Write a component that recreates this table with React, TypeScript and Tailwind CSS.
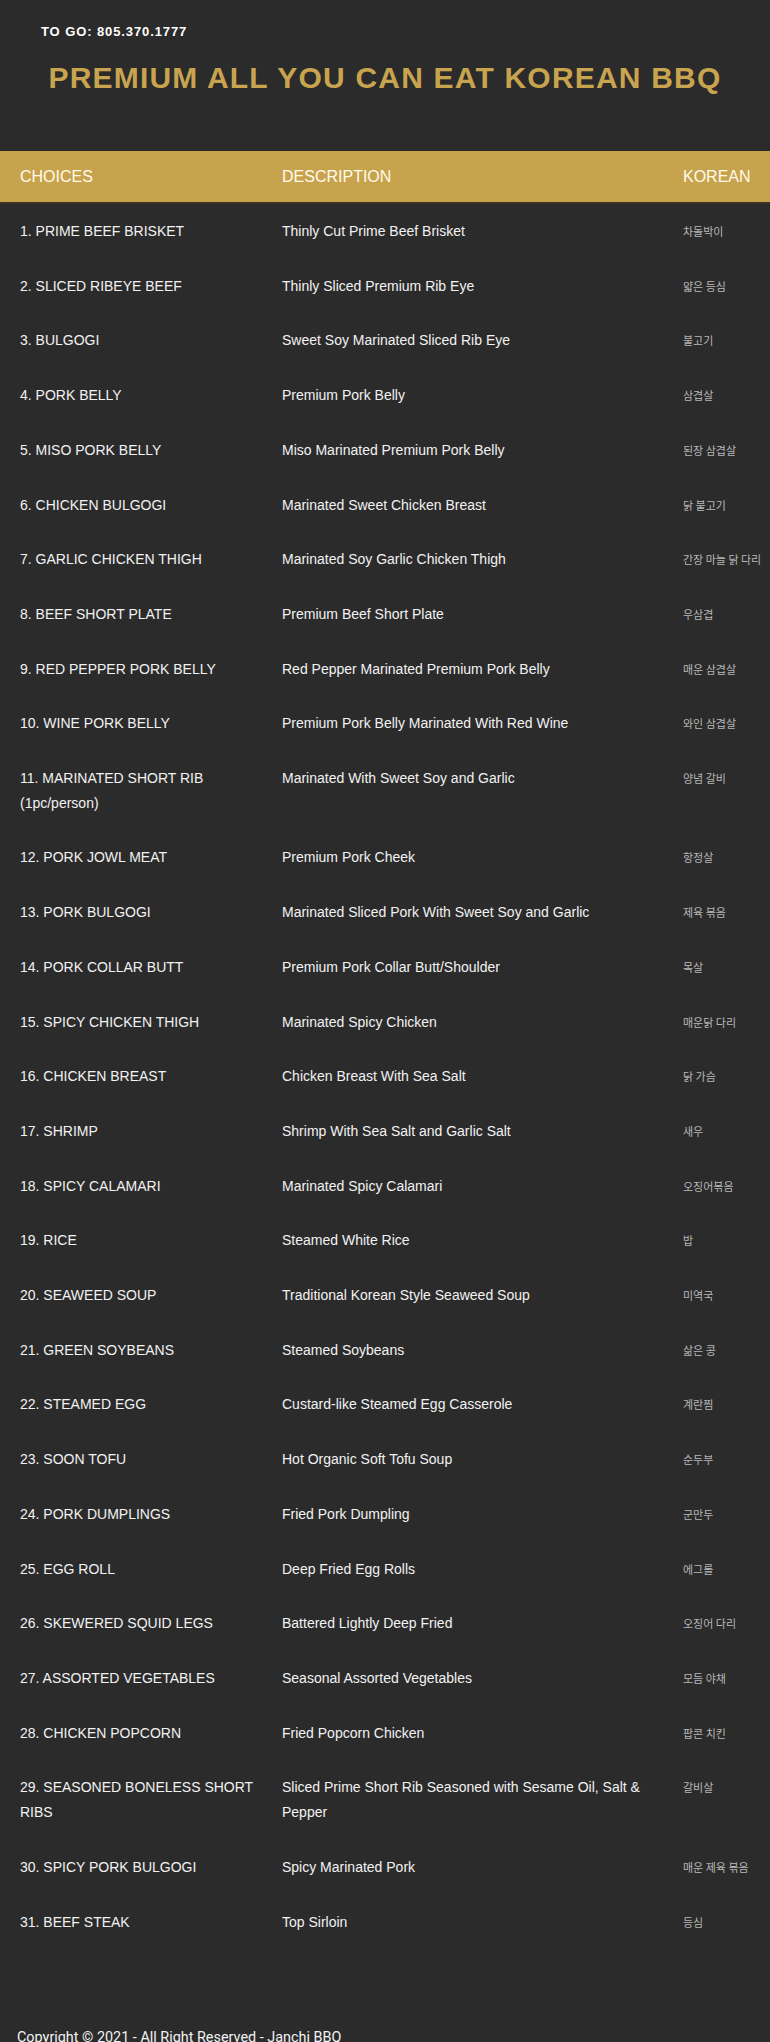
import React from 'react';

type Item = { name: string; desc: string; kr: string };

const items: Item[] = [
  { name: '1. PRIME BEEF BRISKET', desc: 'Thinly Cut Prime Beef Brisket', kr: '차돌박이' },
  { name: '2. SLICED RIBEYE BEEF', desc: 'Thinly Sliced Premium Rib Eye', kr: '얇은 등심' },
  { name: '3. BULGOGI', desc: 'Sweet Soy Marinated Sliced Rib Eye', kr: '불고기' },
  { name: '4. PORK BELLY', desc: 'Premium Pork Belly', kr: '삼겹살' },
  { name: '5. MISO PORK BELLY', desc: 'Miso Marinated Premium Pork Belly', kr: '된장 삼겹살' },
  { name: '6. CHICKEN BULGOGI', desc: 'Marinated Sweet Chicken Breast', kr: '닭 불고기' },
  { name: '7. GARLIC CHICKEN THIGH', desc: 'Marinated Soy Garlic Chicken Thigh', kr: '간장 마늘 닭 다리' },
  { name: '8. BEEF SHORT PLATE', desc: 'Premium Beef Short Plate', kr: '우삼겹' },
  { name: '9. RED PEPPER PORK BELLY', desc: 'Red Pepper Marinated Premium Pork Belly', kr: '매운 삼겹살' },
  { name: '10. WINE PORK BELLY', desc: 'Premium Pork Belly Marinated With Red Wine', kr: '와인 삼겹살' },
  { name: '11. MARINATED SHORT RIB (1pc/person)', desc: 'Marinated With Sweet Soy and Garlic', kr: '양념 갈비' },
  { name: '12. PORK JOWL MEAT', desc: 'Premium Pork Cheek', kr: '항정살' },
  { name: '13. PORK BULGOGI', desc: 'Marinated Sliced Pork With Sweet Soy and Garlic', kr: '제육 볶음' },
  { name: '14. PORK COLLAR BUTT', desc: 'Premium Pork Collar Butt/Shoulder', kr: '목살' },
  { name: '15. SPICY CHICKEN THIGH', desc: 'Marinated Spicy Chicken', kr: '매운닭 다리' },
  { name: '16. CHICKEN BREAST', desc: 'Chicken Breast With Sea Salt', kr: '닭 가슴' },
  { name: '17. SHRIMP', desc: 'Shrimp With Sea Salt and Garlic Salt', kr: '새우' },
  { name: '18. SPICY CALAMARI', desc: 'Marinated Spicy Calamari', kr: '오징어볶음' },
  { name: '19. RICE', desc: 'Steamed White Rice', kr: '밥' },
  { name: '20. SEAWEED SOUP', desc: 'Traditional Korean Style Seaweed Soup', kr: '미역국' },
  { name: '21. GREEN SOYBEANS', desc: 'Steamed Soybeans', kr: '삶은 콩' },
  { name: '22. STEAMED EGG', desc: 'Custard-like Steamed Egg Casserole', kr: '계란찜' },
  { name: '23. SOON TOFU', desc: 'Hot Organic Soft Tofu Soup', kr: '순두부' },
  { name: '24. PORK DUMPLINGS', desc: 'Fried Pork Dumpling', kr: '군만두' },
  { name: '25. EGG ROLL', desc: 'Deep Fried Egg Rolls', kr: '에그롤' },
  { name: '26. SKEWERED SQUID LEGS', desc: 'Battered Lightly Deep Fried', kr: '오징어 다리' },
  { name: '27. ASSORTED VEGETABLES', desc: 'Seasonal Assorted Vegetables', kr: '모듬 야채' },
  { name: '28. CHICKEN POPCORN', desc: 'Fried Popcorn Chicken', kr: '팝콘 치킨' },
  { name: '29. SEASONED BONELESS SHORT RIBS', desc: 'Sliced Prime Short Rib Seasoned with Sesame Oil, Salt & Pepper', kr: '갈비살' },
  { name: '30. SPICY PORK BULGOGI', desc: 'Spicy Marinated Pork', kr: '매운 제육 볶음' },
  { name: '31. BEEF STEAK', desc: 'Top Sirloin', kr: '등심' },
];

function App() {
  return (
    <div className="min-h-screen bg-[#2b2b2b] font-['Liberation_Sans',Arial,sans-serif] overflow-hidden">
      <header className="pt-[24px] pb-[55px]">
        <p className="px-[41px] text-[13px] leading-[16px] font-bold tracking-[0.9px] text-white">
          TO GO: 805.370.1777
        </p>
        <h1 className="mt-[20px] text-center text-[30px] leading-[36px] font-bold tracking-[1.2px] text-[#c9a44f]">
          PREMIUM ALL YOU CAN EAT KOREAN BBQ
        </h1>
      </header>

      <div className="grid grid-cols-[262px_421px_87px] bg-[#c8a34e] border-b-2 border-[#3a3224] text-[16px] leading-[19px] text-[#fffbea]">
        <div className="pl-[20px] py-[16px]">CHOICES</div>
        <div className="pl-[20px] py-[16px]">DESCRIPTION</div>
        <div className="py-[16px]">KOREAN</div>
      </div>

      <div className="text-[14px] leading-[24.7px] text-[#f2f2f2]">
        {items.map((it) => (
          <div key={it.name} className="grid grid-cols-[262px_421px_87px]">
            <div className="pl-[20px] py-[15px]">{it.name}</div>
            <div className="pl-[20px] py-[15px]">{it.desc}</div>
            <div className="py-[15px] whitespace-nowrap text-[11px] text-[#b8b8b8] font-['Noto_Sans_CJK_KR',sans-serif]">
              {it.kr}
            </div>
          </div>
        ))}
      </div>

      <footer className="mt-[79px] pl-[17px] text-[14.4px] leading-[20px] text-[#f2f2f2] font-['Roboto',sans-serif]">
        Copyright © 2021 - All Right Reserved - Janchi BBQ
      </footer>
    </div>
  );
}

export default App;
